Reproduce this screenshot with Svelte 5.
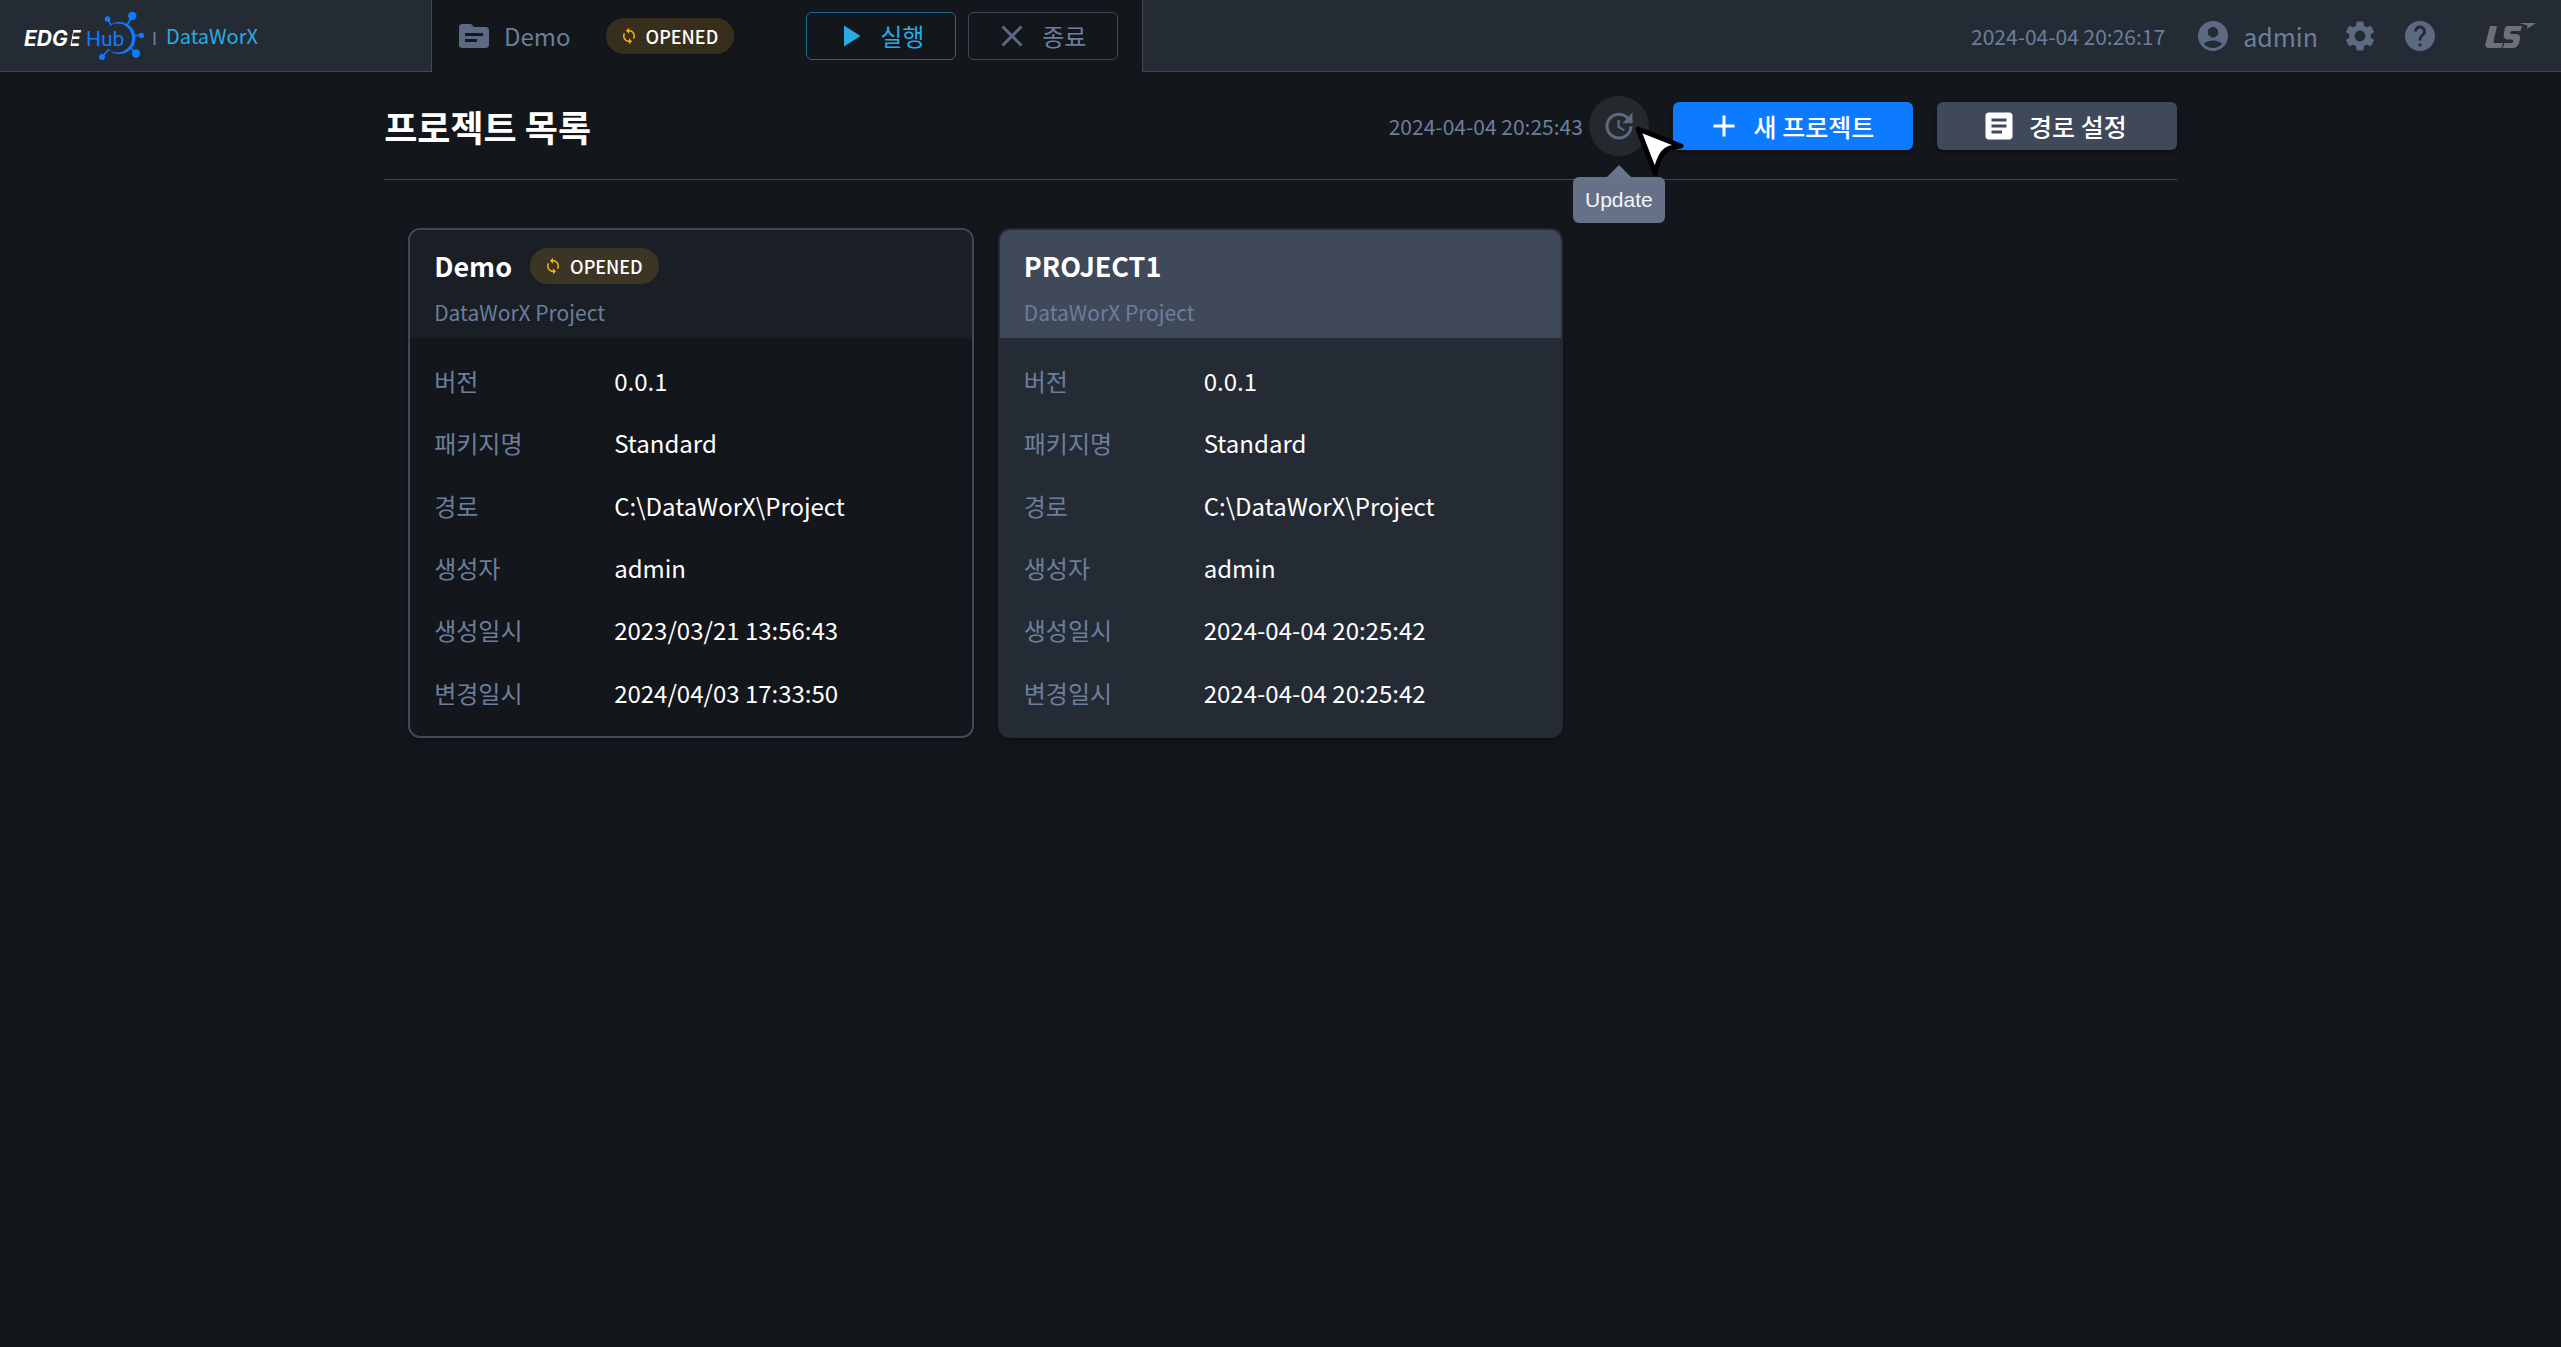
<script>
  const user = 'admin';
  const projects = [
    {
      name: 'Demo',
      description: 'DataWorX Project',
      opened: true,
      fields: [
        ['버전', '0.0.1'],
        ['패키지명', 'Standard'],
        ['경로', 'C:\\DataWorX\\Project'],
        ['생성자', 'admin'],
        ['생성일시', '2023/03/21 13:56:43'],
        ['변경일시', '2024/04/03 17:33:50']
      ]
    },
    {
      name: 'PROJECT1',
      description: 'DataWorX Project',
      opened: false,
      fields: [
        ['버전', '0.0.1'],
        ['패키지명', 'Standard'],
        ['경로', 'C:\\DataWorX\\Project'],
        ['생성자', 'admin'],
        ['생성일시', '2024-04-04 20:25:42'],
        ['변경일시', '2024-04-04 20:25:42']
      ]
    }
  ];

  const icons = {
    folder: 'M20 6h-8l-2-2H4c-1.1 0-1.99.9-1.99 2L2 18c0 1.1.9 2 2 2h16c1.1 0 2-.9 2-2V8c0-1.1-.9-2-2-2zm-6 10H6v-2h8v2zm4-4H6v-2h12v2z',
    sync: 'M12 4V1L8 5l4 4V6c3.31 0 6 2.69 6 6 0 1.01-.25 1.97-.7 2.8l1.46 1.46C19.54 15.03 20 13.57 20 12c0-4.42-3.58-8-8-8zm0 14c-3.31 0-6-2.69-6-6 0-1.01.25-1.97.7-2.8L5.24 7.74C4.46 8.97 4 10.43 4 12c0 4.42 3.58 8 8 8v3l4-4-4-4v3z',
    play: 'M8 5v14l11-7z',
    close: 'M19 6.41 17.59 5 12 10.59 6.41 5 5 6.41 10.59 12 5 17.59 6.41 19 12 13.41 17.59 19 19 17.59 13.41 12z',
    account: 'M12 2C6.48 2 2 6.48 2 12s4.48 10 10 10 10-4.48 10-10S17.52 2 12 2zm0 4c1.93 0 3.5 1.57 3.5 3.5S13.93 13 12 13s-3.5-1.57-3.5-3.5S10.07 6 12 6zm0 14c-2.03 0-4.43-.82-6.14-2.88C7.55 15.8 9.68 15 12 15s4.45.8 6.14 2.12C16.43 19.18 14.03 20 12 20z',
    gear: 'M19.14 12.94c.04-.3.06-.61.06-.94 0-.32-.02-.64-.07-.94l2.03-1.58c.18-.14.23-.41.12-.61l-1.92-3.32c-.12-.22-.37-.29-.59-.22l-2.39.96c-.5-.38-1.03-.7-1.62-.94l-.36-2.54c-.04-.24-.24-.41-.48-.41h-3.84c-.24 0-.43.17-.47.41l-.36 2.54c-.59.24-1.13.57-1.62.94l-2.39-.96c-.22-.08-.47 0-.59.22L2.74 8.87c-.12.21-.08.47.12.61l2.03 1.58c-.05.3-.09.63-.09.94s.02.64.07.94l-2.03 1.58c-.18.14-.23.41-.12.61l1.92 3.32c.12.22.37.29.59.22l2.39-.96c.5.38 1.03.7 1.62.94l.36 2.54c.05.24.24.41.48.41h3.84c.24 0 .44-.17.47-.41l.36-2.54c.59-.24 1.13-.56 1.62-.94l2.39.96c.22.08.47 0 .59-.22l1.92-3.32c.12-.22.07-.47-.12-.61l-2.01-1.58zM12 15.6c-1.98 0-3.6-1.62-3.6-3.6s1.62-3.6 3.6-3.6 3.6 1.62 3.6 3.6-1.62 3.6-3.6 3.6z',
    help: 'M12 2C6.48 2 2 6.48 2 12s4.48 10 10 10 10-4.48 10-10S17.52 2 12 2zm1 17h-2v-2h2v2zm2.07-7.75-.9.92C13.45 12.9 13 13.5 13 15h-2v-.5c0-1.1.45-2.1 1.17-2.83l1.24-1.26c.37-.36.59-.86.59-1.41 0-1.1-.9-2-2-2s-2 .9-2 2H8c0-2.21 1.79-4 4-4s4 1.79 4 4c0 .88-.36 1.68-.93 2.25z',
    update: 'M21 10.12h-6.78l2.74-2.82c-2.73-2.7-7.15-2.8-9.88-.1-2.73 2.71-2.73 7.08 0 9.79s7.15 2.71 9.88 0C18.32 15.65 19 14.08 19 12.1h2c0 1.98-.88 4.55-2.64 6.29-3.51 3.48-9.21 3.48-12.72 0-3.5-3.47-3.53-9.11-.02-12.58s9.14-3.47 12.65 0L21 3v7.12zM12.5 8v4.25l3.5 2.08-.72 1.21L11 13V8h1.5z',
    plus: 'M19 13h-6v6h-2v-6H5v-2h6V5h2v6h6v2z',
    article: 'M19 3H5c-1.1 0-2 .9-2 2v14c0 1.1.9 2 2 2h14c1.1 0 2-.9 2-2V5c0-1.1-.9-2-2-2zm-5 14H7v-2h7v2zm3-4H7v-2h10v2zm0-4H7V7h10v2z'
  };
</script>

{#snippet icon(name)}
  <svg class="icon" viewBox="0 0 24 24" aria-hidden="true"><path d={icons[name]} /></svg>
{/snippet}

{#snippet badge()}
  <span class="badge">{@render icon('sync')}<span>OPENED</span></span>
{/snippet}

<header class="topbar">
  <a class="brand" href="#home" aria-label="EDGE Hub DataWorX">
    <svg class="brand-mark" viewBox="0 0 140 60" aria-hidden="true">
      <text class="edge" x="0" y="40">EDGE</text>
      <path class="edge-cut" d="M44.500 42L48 23" />
      <text class="hub" x="62" y="40">Hub</text>
      <path class="hub-fill" d="M83 22A16 16 0 1 1 83 42A14.500 14.500 0 1 0 83 22Z" />
      <path class="hub-line" d="M83.500 13L87 19M108.300 10L103 19M117.300 29.500H110M112 47.500L107 42M78 51L85 43" />
      <circle class="hub-fill" cx="83.500" cy="13" r="2.800" />
      <circle class="hub-fill" cx="108.300" cy="10" r="4.200" />
      <circle class="hub-fill" cx="117.300" cy="29.500" r="2.800" />
      <circle class="hub-fill" cx="112" cy="47.500" r="4.200" />
      <circle class="hub-fill" cx="78" cy="51" r="3" />
      <path class="brand-rule" d="M130.500 26V39" />
    </svg>
    <span class="product">DataWorX</span>
  </a>

  <div class="session">
    <span class="project">{@render icon('folder')}<span>Demo</span></span>
    {@render badge()}
    <div class="controls">
      <button class="btn outline run" type="button">{@render icon('play')}<span>실행</span></button>
      <button class="btn outline stop" type="button">{@render icon('close')}<span>종료</span></button>
    </div>
  </div>

  <div class="account">
    <time class="stamp">2024-04-04 20:26:17</time>
    <button class="plain user" type="button">{@render icon('account')}<span>{user}</span></button>
    <button class="plain" type="button" aria-label="Settings">{@render icon('gear')}</button>
    <button class="plain" type="button" aria-label="Help">{@render icon('help')}</button>
    <svg class="company" viewBox="0 0 52 26" aria-label="LS">
      <path d="M5 3H12L8.500 18.500Q8.200 20 10 20H18L16.500 25H4Q-.5 25 .5 20.500Z" />
      <path d="M22 3H37L35.500 8H27Q25.500 8 25.200 9.500Q25 11 26.500 11H31Q36 11.500 35 16L34 20Q32.500 25 27.500 25H17.500L19.500 20H26.500Q28 20 28.300 18.500Q28.500 17 27 16.500H22.500Q18 16 18.700 11L19.500 7Q20 3.500 22 3Z" />
      <path d="M34 0H51L42 6L42.500 2.500Z" />
    </svg>
  </div>
</header>

<main class="page">
  <div class="heading">
    <h1>프로젝트 목록</h1>
    <div class="refresh">
      <time class="stamp">2024-04-04 20:25:43</time>
      <div class="update">
        <button class="round" type="button" aria-describedby="update-tip" aria-label="Update">{@render icon('update')}</button>
        <span class="tooltip" id="update-tip" role="tooltip">Update</span>
        <svg class="pointer" viewBox="0 0 52 52" aria-hidden="true">
          <path d="M4 4L47 21Q33 22 29 28Q25 33 21 48Z" />
        </svg>
      </div>
    </div>
    <div class="actions">
      <button class="btn primary" type="button">{@render icon('plus')}<span>새 프로젝트</span></button>
      <button class="btn neutral" type="button">{@render icon('article')}<span>경로 설정</span></button>
    </div>
  </div>

  <section class="cards">
    {#each projects as project}
      <article class="card" class:opened={project.opened}>
        <div class="card-head">
          <div class="card-title">
            <h2>{project.name}</h2>
            {#if project.opened}{@render badge()}{/if}
          </div>
          <p>{project.description}</p>
        </div>
        <dl>
          {#each project.fields as [label, value]}
            <div class="row">
              <dt>{label}</dt>
              <dd>{value}</dd>
            </div>
          {/each}
        </dl>
      </article>
    {/each}
  </section>
</main>

<style>
  :global(body) {
    background: #13161b;
    color: #fff;
    font-family: 'Noto Sans CJK KR', 'Noto Sans', sans-serif;
    font-size: 24px;
    line-height: 36px;
  }

  :global(*) {
    box-sizing: border-box;
  }

  button {
    font: inherit;
    cursor: pointer;
  }

  .icon {
    width: 36px;
    height: 36px;
    flex: none;
    fill: currentColor;
  }

  .topbar {
    display: flex;
    height: 72px;
    color: #6b7f9c;
  }

  .brand,
  .account {
    display: flex;
    align-items: center;
    background: #252b34;
    border-bottom: 1px solid #404959;
  }

  .brand {
    gap: 2px;
    width: 432px;
    padding-left: 24px;
    border-right: 1px solid #404959;
    text-decoration: none;
  }

  .brand-mark {
    width: 140px;
    height: 60px;
  }

  .edge {
    fill: #fff;
    font: italic 700 21px Inter, sans-serif;
  }

  .edge-cut {
    stroke: #252b34;
    stroke-width: 3;
  }

  .hub {
    fill: #0d7bff;
    font: 400 21px Roboto, sans-serif;
  }

  .hub-fill {
    fill: #0d7bff;
  }

  .hub-line {
    stroke: #0d7bff;
    stroke-width: 1.5;
  }

  .brand-rule {
    stroke: #6b7490;
    stroke-width: 2;
  }

  .product {
    color: #29abe2;
    font-size: 20px;
  }

  .session {
    display: flex;
    align-items: center;
    padding: 0 24px;
  }

  .project {
    display: flex;
    align-items: center;
    gap: 12px;
    margin-right: 35px;
  }

  .project .icon {
    color: #5b6a82;
  }

  .badge {
    display: inline-flex;
    align-items: center;
    gap: 8px;
    height: 36px;
    padding: 0 16px 0 14px;
    border-radius: 18px;
    background: rgba(251, 176, 33, 0.16);
    color: #fff;
    font-size: 18px;
    font-weight: 500;
  }

  .badge .icon {
    width: 18px;
    height: 18px;
    color: #fbb021;
  }

  .controls {
    display: flex;
    gap: 12px;
    margin-left: 72px;
  }

  .btn {
    display: flex;
    align-items: center;
    justify-content: center;
    height: 48px;
    padding: 0;
    border: 0;
    border-radius: 6px;
    color: #fff;
    font-size: 25px;
    font-weight: 500;
  }

  .btn .icon {
    margin: 0 12px 0 -6px;
  }

  .outline {
    width: 150px;
    background: transparent;
    font-size: 24px;
    font-weight: 400;
  }

  .run {
    border: 1px solid #1c6a8c;
    color: #29abe2;
  }

  .stop {
    border: 1px solid #404959;
    color: #6b7f9c;
  }

  .stop .icon,
  .account .icon,
  .round .icon {
    color: #5b6a82;
  }

  .account {
    flex: 1;
    justify-content: flex-end;
    gap: 24px;
    padding-right: 24px;
    border-left: 1px solid #404959;
  }

  .stamp {
    color: #6b7f9c;
    font-size: 21px;
    white-space: nowrap;
  }

  .plain {
    display: flex;
    align-items: center;
    gap: 12px;
    padding: 0;
    border: 0;
    background: none;
    color: inherit;
  }

  .user {
    margin-left: 6px;
    font-size: 25px;
  }

  .company {
    width: 52px;
    height: 26px;
    margin-left: 23px;
    fill: #6d7075;
  }

  .page {
    width: 70%;
    margin: 0 auto;
  }

  .heading {
    display: flex;
    align-items: center;
    height: 108px;
    border-bottom: 1px solid #404959;
  }

  h1 {
    flex: 1;
    margin: 0;
    font-size: 36px;
    line-height: 48px;
    font-weight: 700;
  }

  .refresh {
    display: flex;
    align-items: center;
    gap: 6px;
    margin-right: 24px;
  }

  .update {
    position: relative;
  }

  .round {
    display: flex;
    align-items: center;
    justify-content: center;
    width: 60px;
    height: 60px;
    padding: 0;
    border: 0;
    border-radius: 50%;
    background: #25282d;
  }

  .tooltip {
    position: absolute;
    top: 81px;
    left: -16px;
    width: 92px;
    border-radius: 6px;
    background: #69758cf7;
    color: #f4f5f7;
    font: 21px/46px 'Liberation Sans', Arial, sans-serif;
    text-align: center;
  }

  .tooltip::before {
    content: '';
    position: absolute;
    bottom: 100%;
    left: 34px;
    border: 12px solid transparent;
    border-top: 0;
    border-bottom-color: #69758c;
  }

  .pointer {
    position: absolute;
    z-index: 1;
    top: 29px;
    left: 45px;
    width: 52px;
    height: 52px;
    fill: #fff;
    stroke: #000;
    stroke-width: 5;
    stroke-linejoin: round;
  }

  .actions {
    display: flex;
    gap: 24px;
  }

  .actions .btn {
    width: 240px;
    box-shadow: 0 2px 4px rgba(0, 0, 0, 0.4);
  }

  .primary {
    background: #0d7bff;
  }

  .neutral {
    background: #404959;
  }

  .cards {
    display: grid;
    grid-template-columns: repeat(3, 1fr);
    gap: 24px;
    padding: 48px 24px;
  }

  .card {
    display: flex;
    flex-direction: column;
    min-height: 510px;
    overflow: hidden;
    border: 2px solid #252b34;
    border-radius: 12px;
    background: #252b34;
    box-shadow: 0 2px 4px rgba(0, 0, 0, 0.3);
  }

  .card-head {
    padding: 18px 24px 8px;
    background: #404959;
  }

  .card-title {
    display: flex;
    align-items: center;
    gap: 18px;
  }

  h2 {
    margin: 0;
    font-size: 27px;
    line-height: 36px;
    font-weight: 700;
  }

  .card-head p {
    margin: 10px 0 0;
    color: #6b7f9c;
    font-size: 21px;
  }

  .card.opened {
    border-color: #404959;
    background: #13161b;
  }

  .opened .card-head {
    background: #1a1e25;
  }

  dl {
    display: flex;
    flex: 1;
    flex-direction: column;
    margin: 0;
    padding: 12px 24px;
  }

  .row {
    display: flex;
    flex: 1;
    align-items: center;
  }

  dt {
    width: 180px;
    color: #6b7f9c;
  }

  dd {
    margin: 0;
  }
</style>
